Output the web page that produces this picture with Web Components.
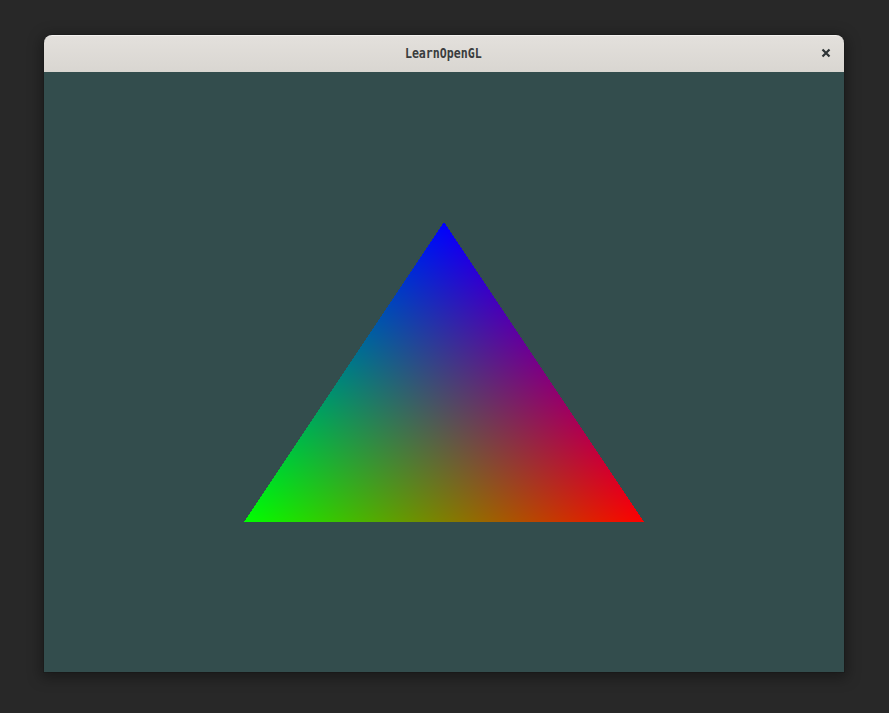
<!DOCTYPE html>
<html>
<head>
<meta charset="utf-8">
<title>LearnOpenGL</title>
<style>
  html, body { margin: 0; padding: 0; height: 100%; background: #282828; overflow: hidden; }
</style>
</head>
<body>
<desktop-screen>
  <app-window title="LearnOpenGL">
    <gl-triangle></gl-triangle>
  </app-window>
</desktop-screen>
<script>
class DesktopScreen extends HTMLElement {
  constructor() {
    super()
    this.attachShadow({ mode: 'open' })
    this.shadowRoot.innerHTML = `
      <style>
        :host {
          display: flex;
          align-items: flex-start;
          box-sizing: border-box;
          height: 713px;
          padding: 35px 0 0 44px;
          background: #282828;
        }
      </style>
      <slot></slot>
    `
  }
}

class AppWindow extends HTMLElement {
  constructor() {
    super()
    this.attachShadow({ mode: 'open' })
    this.shadowRoot.innerHTML = `
      <style>
        :host {
          display: block;
          width: 800px;
          border-radius: 8px 8px 0 0;
          box-shadow: 0 3px 14px 3px rgba(0,0,0,0.35), 0 0 0 1px rgba(0,0,0,0.12);
        }
        header {
          display: flex;
          align-items: center;
          justify-content: center;
          position: relative;
          box-sizing: border-box;
          height: 37px;
          padding: 0 1px 2px 0;
          border-radius: 8px 8px 0 0;
          border-top: 1px solid #f3f1ef;
          background: linear-gradient(#e3e0dc, #d9d6d1);
          color: #3a3d3e;
          font: bold 14px "DejaVu Sans Mono", monospace;
        }
        .title {
          display: block;
          transform: scaleX(0.83);
        }
        .close {
          position: absolute;
          right: 12px;
          top: 11px;
          width: 12px;
          height: 12px;
          display: block;
        }
      </style>
      <header>
        <span class="title"></span>
        <svg class="close" viewBox="0 0 12 12" fill="none" stroke="#2e3436" stroke-width="2.2">
          <path d="M2.5 2.5 9.5 9.5M9.5 2.5 2.5 9.5"/>
        </svg>
      </header>
      <slot></slot>
    `
    this.shadowRoot.querySelector('.title').textContent = this.getAttribute('title')
  }
}

class GlTriangle extends HTMLElement {
  constructor() {
    super()
    this.attachShadow({ mode: 'open' })
    this.shadowRoot.innerHTML = `
      <style>
        :host { display: block; width: 800px; height: 600px; }
        canvas { display: block; }
      </style>
      <canvas width="800" height="600"></canvas>
    `
    this.render()
  }

  // same interpolation the fragment shader gets: red right, green left, blue top
  render() {
    const ctx = this.shadowRoot.querySelector('canvas').getContext('2d')
    const img = ctx.createImageData(800, 600)
    for (let y = 0; y < 600; y++) {
      for (let x = 0; x < 800; x++) {
        const px = x + 0.5, py = y + 0.5
        const b = (450 - py) / 300
        const r = ((px - 200) / 400) - b / 2
        const g = 1 - r - b
        const i = (y * 800 + x) * 4
        if (r >= 0 && g >= 0 && b >= 0) {
          img.data[i] = r * 255
          img.data[i + 1] = g * 255
          img.data[i + 2] = b * 255
        } else {
          img.data[i] = 0x33
          img.data[i + 1] = 0x4d
          img.data[i + 2] = 0x4d
        }
        img.data[i + 3] = 255
      }
    }
    ctx.putImageData(img, 0, 0)
  }
}

customElements.define('desktop-screen', DesktopScreen)
customElements.define('app-window', AppWindow)
customElements.define('gl-triangle', GlTriangle)
</script>
</body>
</html>
